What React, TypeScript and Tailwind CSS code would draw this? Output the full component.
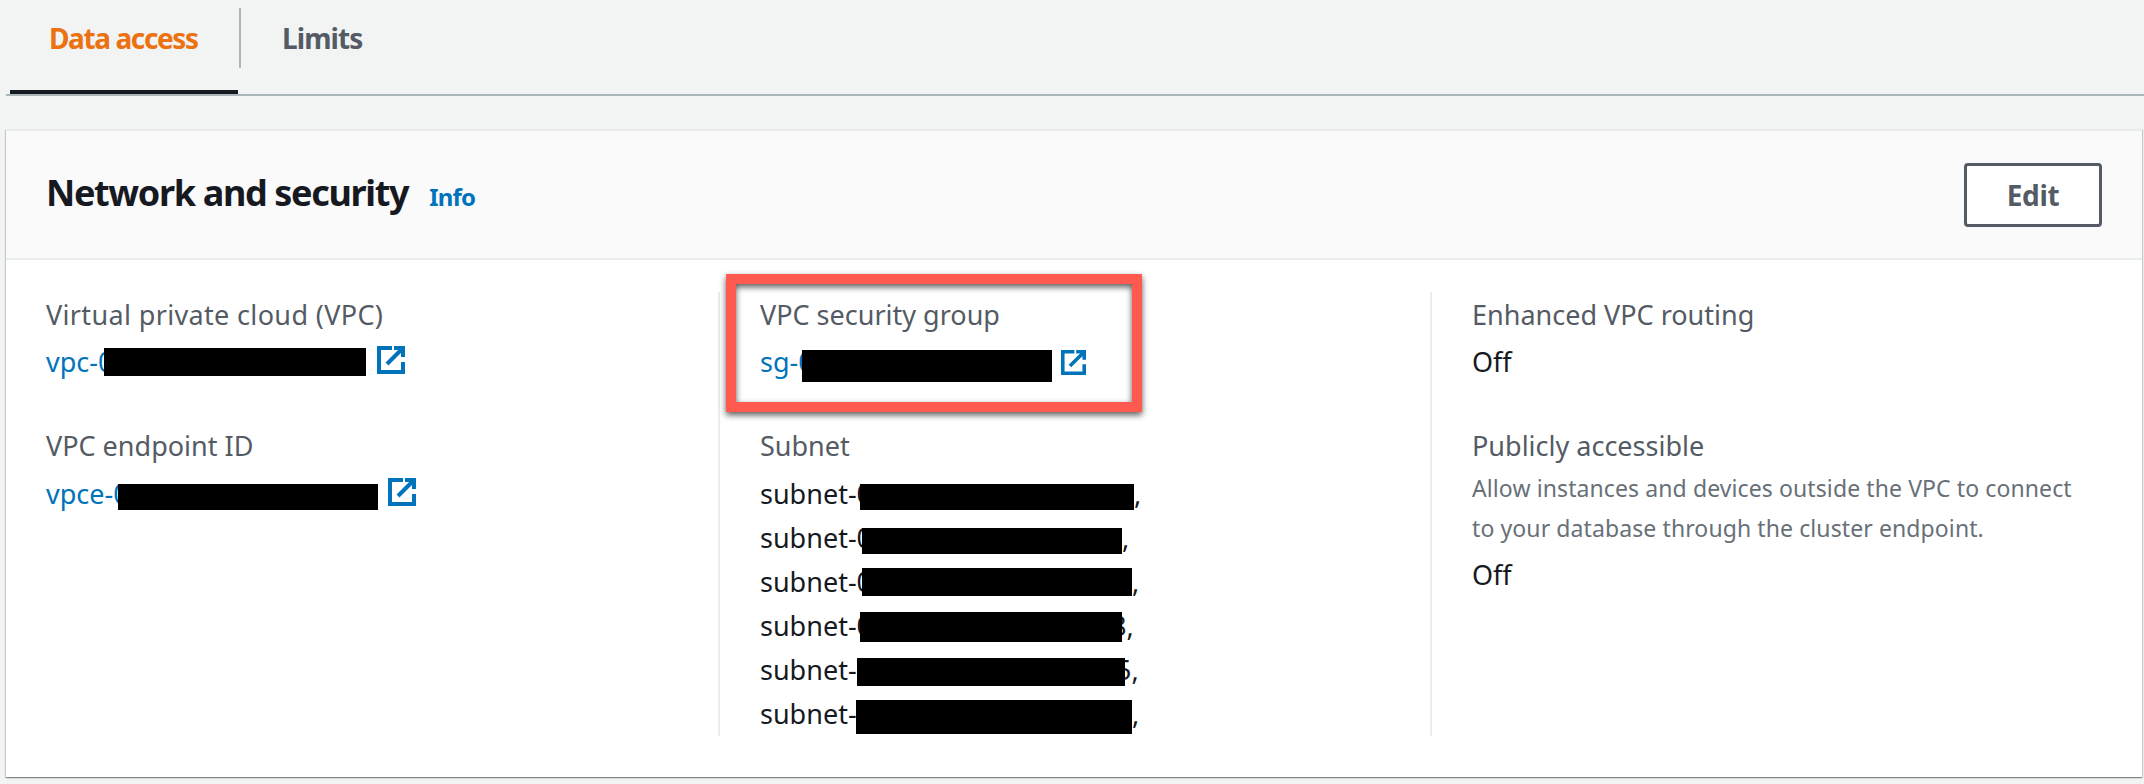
const font = "font-['Noto_Sans',sans-serif]";

const ExternalIcon = ({ className }: { className?: string }) => (
  <svg viewBox="0 0 28 28" fill="none" stroke="#0073bb" strokeWidth="4" className={className}>
    <path d="M15 2H2v24h24V16" />
    <path d="M10 18L25 3" />
    <path d="M17 2h9v9" />
  </svg>
);

const Label = ({ children, className }: { children: string; className?: string }) => (
  <div className={`h-[44px] text-[27px] leading-[44px] text-[#545b64] ${className ?? ""}`}>{children}</div>
);

const LinkRow = ({
  prefix,
  prefixClass,
  barClass,
  iconClass,
}: {
  prefix: string;
  prefixClass: string;
  barClass: string;
  iconClass: string;
}) => (
  <div className="mt-[4px] flex h-[44px] items-center pb-[2px] text-[27px] text-[#0073bb]">
    <span className={`shrink-0 whitespace-nowrap ${prefixClass}`}>{prefix}</span>
    <div className={`shrink-0 self-start bg-black ${barClass}`} />
    <ExternalIcon className={`shrink-0 self-start ${iconClass}`} />
  </div>
);

const SubnetRow = ({
  text = "subnet-0",
  prefixClass,
  barClass,
  tail,
  tailClass,
  className,
}: {
  text?: string;
  prefixClass: string;
  barClass: string;
  tail?: string;
  tailClass?: string;
  className?: string;
}) => (
  <div className={`flex h-[44px] items-center pb-[2px] text-[27px] text-[#16191f] ${className ?? ""}`}>
    <span className={`shrink-0 whitespace-nowrap ${prefixClass}`}>{text}</span>
    <div className={`relative z-10 shrink-0 self-start bg-black ${barClass}`} />
    {tail ? <span className={tailClass}>{tail}</span> : null}
    <span>,</span>
  </div>
);

export default function App() {
  return (
    <div className={`h-[784px] w-[2144px] overflow-hidden bg-[#f2f3f3] pl-[6px] ${font}`}>
      {/* tabs */}
      <div className="flex h-[96px] border-b-2 border-[#aab7b8]">
        <div className="ml-[4px] h-[94px] w-[228px] border-b-4 border-[#16191f] pl-[39px] pt-[16px] text-[28px] leading-[44px] font-bold tracking-[-1.4px] text-[#ec7211]">
          Data access
        </div>
        <div className="ml-px mt-[8px] h-[60px] w-[2px] bg-[#aab7b8]" />
        <div className="pl-[41px] pt-[16px] text-[28px] leading-[44px] font-bold tracking-[-0.9px] text-[#545b64]">
          Limits
        </div>
      </div>

      {/* card */}
      <div className="mt-[33px] h-[648px] w-[2136px] bg-white shadow-[0_1px_1px_0_rgba(0,28,36,0.3),1px_1px_1px_0_rgba(0,28,36,0.15),-1px_1px_1px_0_rgba(0,28,36,0.15)]">
        <div className="flex h-[131px] items-center justify-between border-y-2 border-[#eaeded] bg-[#fafafa] pl-[40px] pr-[40px]">
          <div className="flex items-baseline pb-[3px]">
            <h2 className="text-[36px] leading-[44px] font-bold tracking-[-1.35px] text-[#16191f]">
              Network and security
            </h2>
            <span className="ml-[21px] text-[24px] font-bold tracking-[-0.8px] text-[#0073bb]">Info</span>
          </div>
          <button className="h-[64px] w-[138px] rounded-[4px] border-[3px] border-[#545b64] bg-white text-[28px] font-bold tracking-[-0.4px] text-[#545b64]">
            Edit
          </button>
        </div>

        <div className="grid grid-cols-3 pt-[32px]">
          <div className="h-[444px] pl-[40px] pt-px">
            <Label className="tracking-[0.35px]">Virtual private cloud (VPC)</Label>
            <LinkRow
              prefix="vpc-0"
              prefixClass="w-[58px]"
              barClass="mt-[7px] h-[28px] w-[262px]"
              iconClass="ml-[11px] mt-[5px] h-[28px] w-[28px]"
            />
            <div className="mt-[40px] -translate-y-px">
              <Label>VPC endpoint ID</Label>
            </div>
            <LinkRow
              prefix="vpce-0"
              prefixClass="w-[72px]"
              barClass="mt-[11px] h-[26px] w-[260px]"
              iconClass="ml-[10px] mt-[5px] h-[28px] w-[28px]"
            />
          </div>

          <div className="relative h-[444px] border-l-2 border-[#eaeded] pl-[40px] pt-px">
            <Label>VPC security group</Label>
            <LinkRow
              prefix="sg-0"
              prefixClass="w-[42px]"
              barClass="mt-[9px] h-[32px] w-[250px]"
              iconClass="ml-[9px] mt-[9px] h-[25px] w-[25px]"
            />
            <div className="mt-[40px] -translate-y-px">
              <Label>Subnet</Label>
            </div>
            <SubnetRow className="mt-[4px]" prefixClass="w-[100px]" barClass="mt-[11px] h-[26px] w-[274px]" />
            <SubnetRow prefixClass="w-[102px]" barClass="mt-[11px] h-[26px] w-[260px]" />
            <SubnetRow prefixClass="w-[102px]" barClass="mt-[7px] h-[28px] w-[270px]" />
            <SubnetRow
              prefixClass="w-[100px]"
              barClass="mt-[7px] h-[30px] w-[262px]"
              tail="8"
              tailClass="ml-[-11px]"
            />
            <SubnetRow
              text="subnet-"
              prefixClass="w-[97px]"
              barClass="mt-[9px] h-[28px] w-[268px]"
              tail="5"
              tailClass="ml-[-9px]"
            />
            <SubnetRow text="subnet-" prefixClass="w-[96px]" barClass="mt-[7px] h-[34px] w-[276px]" />

            {/* highlight box from the annotated screenshot */}
            <div className="absolute left-[6px] top-[-18px] z-20 h-[138px] w-[416px] border-[10px] border-[#ff5a4f] drop-shadow-[0_3px_3px_rgba(0,0,0,0.65)]" />
          </div>

          <div className="h-[444px] border-l-2 border-[#eaeded] pl-[40px] pt-px">
            <Label>Enhanced VPC routing</Label>
            <div className="mt-[4px] h-[44px] pb-[2px] text-[27px] leading-[42px] text-[#16191f]">Off</div>
            <div className="mt-[40px] -translate-y-px">
              <Label>Publicly accessible</Label>
            </div>
            <div className="-translate-y-px text-[23px] leading-[40px] tracking-[0.1px] text-[#687078]">
              Allow instances and devices outside the VPC to connect
              <br />
              to your database through the cluster endpoint.
            </div>
            <div className="mt-[4px] h-[44px] text-[27px] leading-[44px] text-[#16191f]">Off</div>
          </div>
        </div>
      </div>
    </div>
  );
}
